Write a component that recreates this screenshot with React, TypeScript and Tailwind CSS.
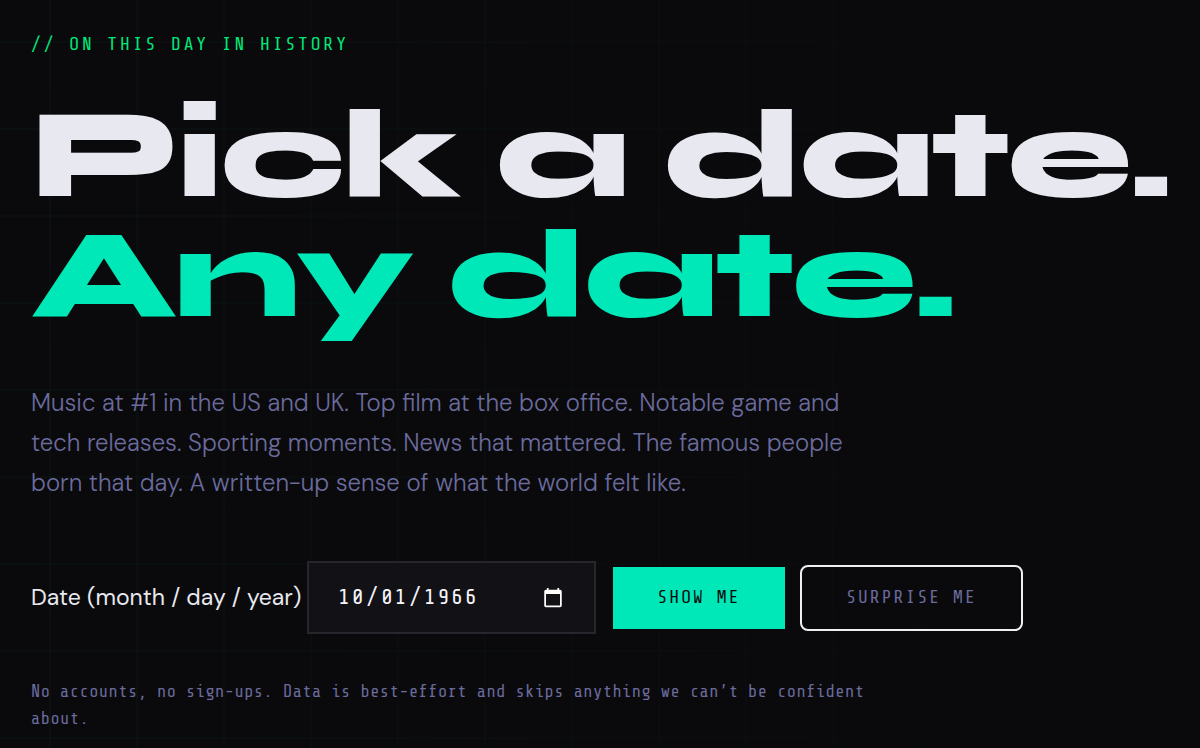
import { useState } from "react";

function randomDate(): string {
  const start = Date.UTC(1950, 0, 1);
  const end = Date.UTC(2020, 11, 31);
  return new Date(start + Math.random() * (end - start)).toISOString().slice(0, 10);
}

export default function App() {
  const [date, setDate] = useState("1966-10-01");

  return (
    <main className="min-h-screen overflow-x-hidden bg-[#0a0a0c] bg-[image:linear-gradient(to_right,transparent,#0a0a0c_90%),linear-gradient(to_right,rgba(0,232,184,0.025)_2px,transparent_2px),linear-gradient(to_bottom,rgba(0,232,184,0.025)_2px,transparent_2px)] bg-[size:100%_100%,87px_87px,87px_87px] bg-[position:0_0,49px_0,0_41px] px-[31px] pt-8 pb-4 font-['DM_Sans','Open_Sans',sans-serif] text-[#e8e8f0]">
      <p className="font-['Share_Tech_Mono','Liberation_Mono',monospace] text-[18px] leading-6 tracking-[3px] text-[#00e87a] uppercase">
        // On this day in history
      </p>

      <h1 className="mt-[39px] font-['Syne','DejaVu_Sans',sans-serif] text-[126px] leading-[120px] font-extrabold tracking-[-0.02em] whitespace-nowrap">
        Pick a date.
        <br />
        <span className="text-[#00e8b8]">Any date.</span>
      </h1>

      <p className="mt-12 max-w-[820px] text-[24px] leading-10 font-light text-[#6b6b9e]">
        Music at #1 in the US and UK. Top film at the box office. Notable game and tech releases.
        Sporting moments. News that mattered. The famous people born that day. A written-up sense
        of what the world felt like.
      </p>

      <form className="mt-[58px] flex items-center" onSubmit={(e) => e.preventDefault()}>
        <label htmlFor="date" className="w-[276px] shrink-0 text-[23px] whitespace-nowrap">
          Date (month / day / year)
        </label>
        <input
          id="date"
          type="date"
          value={date}
          onChange={(e) => setDate(e.target.value)}
          className="h-[73px] w-[289px] border-2 border-[#26262c] bg-[#111116] px-7 font-['Share_Tech_Mono','Liberation_Mono',monospace] text-[22px] tracking-[0.08em] text-[#f4f4fa] [color-scheme:dark]"
        />
        <button
          type="submit"
          className="ml-[17px] h-[62px] w-[172px] bg-[#00e8b8] font-['Share_Tech_Mono','Liberation_Mono',monospace] text-[18px] tracking-[0.12em] text-[#0a0a0c] uppercase"
        >
          Show me
        </button>
        <button
          type="button"
          onClick={() => setDate(randomDate())}
          className="ml-[15px] h-[66px] w-[223px] rounded-lg border-2 border-[#f0f0f4] font-['Share_Tech_Mono','Liberation_Mono',monospace] text-[18px] tracking-[0.12em] text-[#6b6b9e] uppercase"
        >
          Surprise me
        </button>
      </form>

      <p className="mt-11 max-w-[850px] font-['Share_Tech_Mono','Liberation_Mono',monospace] text-[17px] leading-[27px] tracking-[0.03em] text-[#6b6b9e]">
        No accounts, no sign-ups. Data is best-effort and skips anything we can’t be confident
        about.
      </p>
    </main>
  );
}
